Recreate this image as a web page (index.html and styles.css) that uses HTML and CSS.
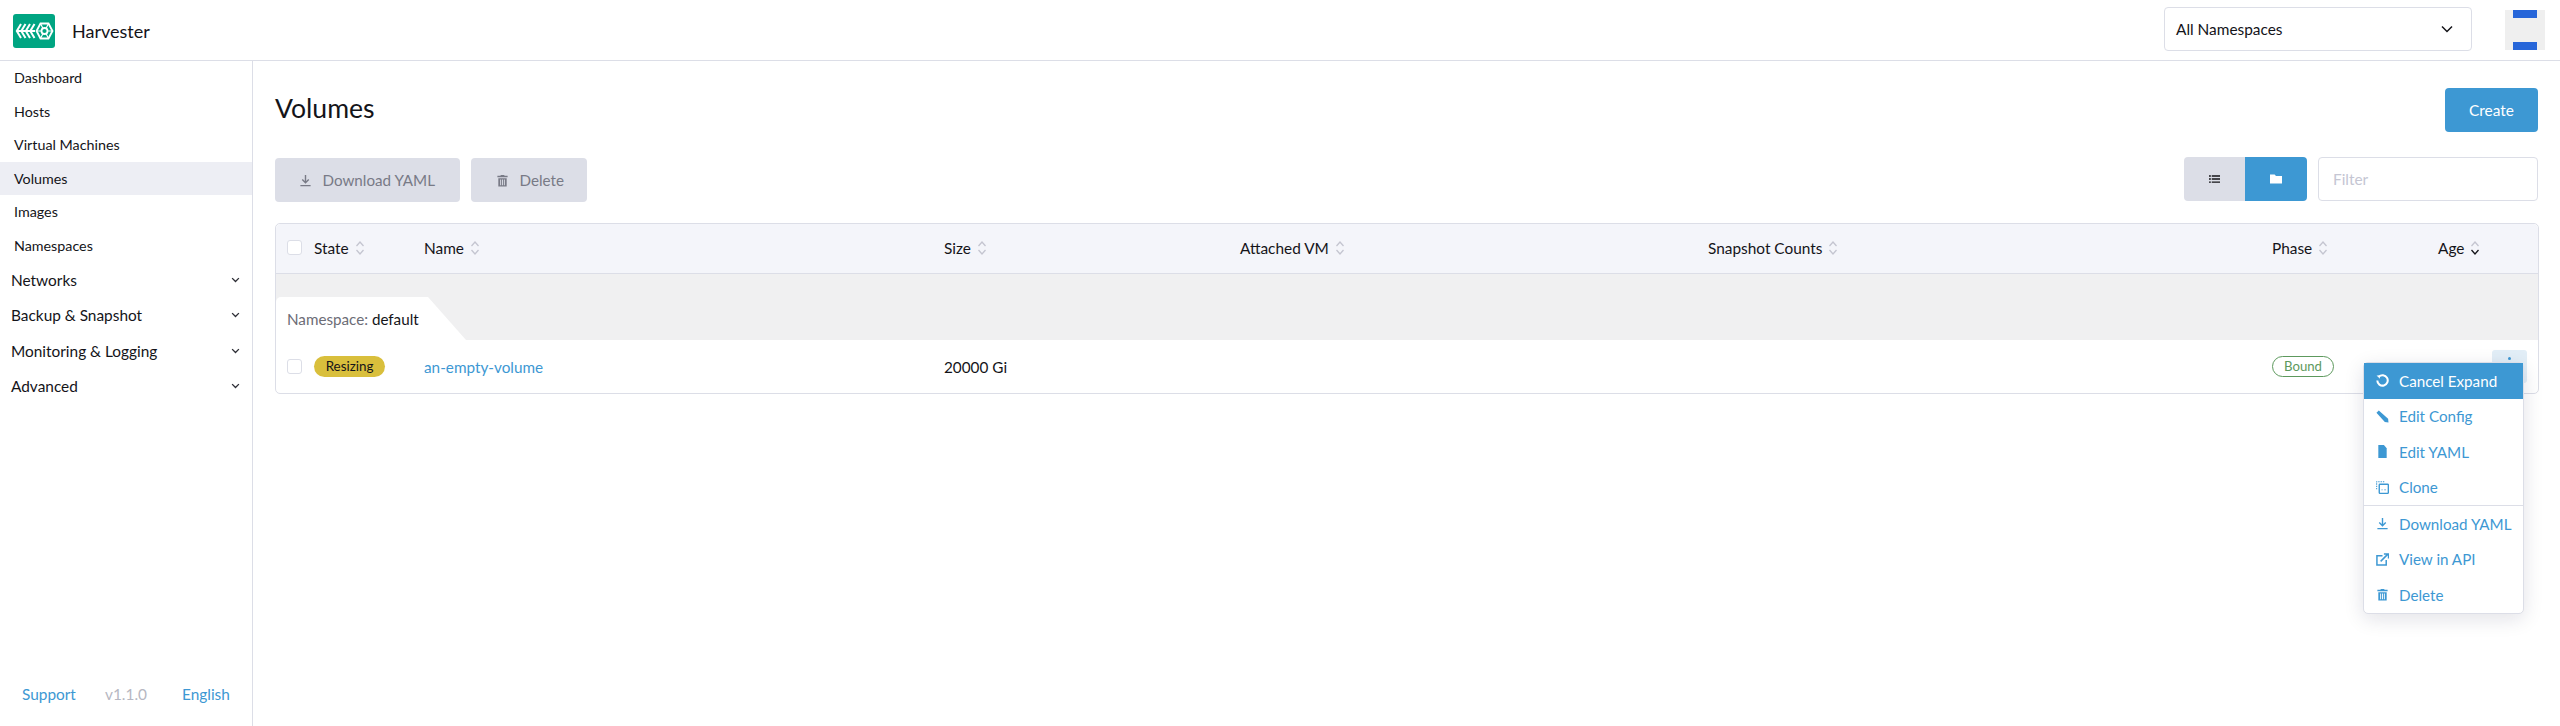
FILE: index.html
```html
<!DOCTYPE html>
<html lang="en">
<head>
<meta charset="utf-8">
<title>Harvester - Volumes</title>
<link rel="stylesheet" href="styles.css">
</head>
<body>
<svg class="sprite" aria-hidden="true">
  <defs>
    <symbol id="sort" viewBox="0 0 10 16"><path class="up" d="M1.500 6 5 2l3.500 4" /><path class="down" d="M1.500 10 5 14l3.500-4" /></symbol>
    <symbol id="chev" viewBox="0 0 12 8"><path d="M1.500 1.500 6 6l4.500-4.500" /></symbol>
    <symbol id="download" viewBox="0 0 14 14"><path d="M7 1v8M3.500 6 7 9.500 10.500 6M1.500 12.500h11" fill="none" stroke="currentColor" stroke-width="1.500"/></symbol>
    <symbol id="trash" viewBox="0 0 14 14"><path d="M5 1h4v1h3.500v1.500h-11V2H5zM2.500 4.500h9V13.500h-9zM4.500 6v6h1V6zM6.500 6v6h1V6zM8.500 6v6h1V6z" fill="currentColor" fill-rule="evenodd"/></symbol>
  </defs>
</svg>
<header class="topbar">
  <div class="brand">
    <svg class="logo" viewBox="0 0 42 34">
      <rect width="42" height="34" rx="3" fill="#00a582"/>
      <g fill="none" stroke="#fff" stroke-width="2">
        <path d="M8 10 3.800 17 8 24M12.500 10l-4.200 7 4.200 7M17 10l-4.200 7 4.200 7M21.500 10l-4.200 7 4.200 7M4 17h18"/>
        <path d="M27.500 9.500h8l4 7.500-4 7.500h-8l-4-7.500z" stroke-width="1.800"/>
        <path d="M27.500 9.500l2.500 5M35.500 9.500l-2.500 5M27.500 24.500l2.500-5M35.500 24.500l-2.500-5M24 17h4.500M35 17h4" stroke-width="1.200"/>
      </g>
      <circle cx="31.500" cy="17" r="3" fill="none" stroke="#fff" stroke-width="1.800"/>
    </svg>
    <span class="brand-name">Harvester</span>
  </div>
  <div class="top-right">
    <div class="ns-select">
      <span>All Namespaces</span>
      <svg class="ns-chev" viewBox="0 0 12 8"><path d="M1 1.500 6 6.500l5-5" /></svg>
    </div>
    <div class="avatar"><i></i><i></i></div>
  </div>
</header>
<div class="shell">
  <nav class="sidebar">
    <a class="nav-item">Dashboard</a>
    <a class="nav-item">Hosts</a>
    <a class="nav-item">Virtual Machines</a>
    <a class="nav-item active">Volumes</a>
    <a class="nav-item">Images</a>
    <a class="nav-item">Namespaces</a>
    <a class="nav-group"><span>Networks</span><svg class="group-chev" viewBox="0 0 12 8"><use href="#chev"/></svg></a>
    <a class="nav-group"><span>Backup &amp; Snapshot</span><svg class="group-chev" viewBox="0 0 12 8"><use href="#chev"/></svg></a>
    <a class="nav-group"><span>Monitoring &amp; Logging</span><svg class="group-chev" viewBox="0 0 12 8"><use href="#chev"/></svg></a>
    <a class="nav-group"><span>Advanced</span><svg class="group-chev" viewBox="0 0 12 8"><use href="#chev"/></svg></a>
    <footer class="side-foot">
      <a>Support</a><span class="version">v1.1.0</span><a>English</a>
    </footer>
  </nav>
  <main class="content">
    <div class="title-row">
      <h1>Volumes</h1>
      <button class="btn-create">Create</button>
    </div>
    <div class="toolbar">
      <div class="bulk">
        <button class="btn-muted dl"><svg class="ic"><use href="#download"/></svg>Download YAML</button>
        <button class="btn-muted del"><svg class="ic"><use href="#trash"/></svg>Delete</button>
      </div>
      <div class="filters">
        <div class="toggle">
          <span class="tg tg-list">
            <svg viewBox="0 0 12 10" class="tg-ic"><path d="M0 1h2v1.500H0zM3 1h9v1.500H3zM0 4.300h2v1.500H0zM3 4.300h9v1.500H3zM0 7.600h2v1.500H0zM3 7.600h9v1.500H3z" fill="#141419"/></svg>
          </span>
          <span class="tg tg-folder">
            <svg viewBox="0 0 13 10" class="tg-ic"><path d="M0 0h5l1.500 1.800H13V10H0z" fill="#fff"/></svg>
          </span>
        </div>
        <div class="filter-input">Filter</div>
      </div>
    </div>
    <section class="table">
      <div class="row head">
        <span class="cell-cb"><i class="cb"></i></span>
        <span class="th">State<svg class="sort"><use href="#sort"/></svg></span>
        <span class="th">Name<svg class="sort"><use href="#sort"/></svg></span>
        <span class="th">Size<svg class="sort"><use href="#sort"/></svg></span>
        <span class="th">Attached VM<svg class="sort"><use href="#sort"/></svg></span>
        <span class="th">Snapshot Counts<svg class="sort"><use href="#sort"/></svg></span>
        <span class="th">Phase<svg class="sort"><use href="#sort"/></svg></span>
        <span class="th">Age<svg class="sort sorted"><use href="#sort"/></svg></span>
      </div>
      <div class="group-row">
        <div class="group-tab"><span class="ns-label">Namespace:</span> default</div>
      </div>
      <div class="row body">
        <span class="cell-cb"><i class="cb"></i></span>
        <span><b class="badge-state">Resizing</b></span>
        <a class="vol-link">an-empty-volume</a>
        <span>20000 Gi</span>
        <span></span>
        <span></span>
        <span><b class="badge-phase">Bound</b></span>
        <span class="cell-act"><i class="act-btn"><i class="dot"></i></i></span>
      </div>
      <ul class="menu">
        <li class="menu-item hot">
          <svg viewBox="0 0 14 14" class="m-ic"><path d="M3 3A5.600 5.600 0 1 1 1.400 7" fill="none" stroke="currentColor" stroke-width="2.200"/><path d="M.6 1.600h3.600v3.600z" fill="currentColor"/></svg>Cancel Expand
        </li>
        <li class="menu-item">
          <svg viewBox="0 0 14 14" class="m-ic"><path d="M.5 3 3 .5 13 9.500l.5 4-4-.5z" fill="currentColor"/></svg>Edit Config
        </li>
        <li class="menu-item">
          <svg viewBox="0 0 14 14" class="m-ic"><path d="M2.500 0H8.500l3 3.500V14h-9z" fill="currentColor"/></svg>Edit YAML
        </li>
        <li class="menu-item">
          <svg viewBox="0 0 14 14" class="m-ic"><path d="M.7 9V.7H9" fill="none" stroke="currentColor" stroke-width="1.100" stroke-dasharray="1.500 1"/><rect x="3.500" y="3.500" width="9.800" height="9.800" rx=".8" fill="none" stroke="currentColor" stroke-width="1.500"/><path d="M6 9.500h1M9 9.500h1.500" stroke="currentColor"/></svg>Clone
        </li>
        <li class="menu-sep"></li>
        <li class="menu-item">
          <svg class="m-ic"><use href="#download"/></svg>Download YAML
        </li>
        <li class="menu-item">
          <svg viewBox="0 0 14 14" class="m-ic"><path d="M7 3H1v10h10V7.500" fill="none" stroke="currentColor" stroke-width="1.600"/><path d="M5 9 12.500 1.500M8.500 1h5v5" fill="none" stroke="currentColor" stroke-width="1.600"/></svg>View in API
        </li>
        <li class="menu-item">
          <svg class="m-ic"><use href="#trash"/></svg>Delete
        </li>
      </ul>
    </section>
  </main>
</div>
</body>
</html>
```
FILE: styles.css
```css
* { box-sizing: border-box; }
html, body { height: 100%; }
body {
  margin: 0;
  display: flex;
  flex-direction: column;
  height: 726px;
  overflow: hidden;
  background: #fff;
  color: #141419;
  font-family: Lato, "Liberation Sans", sans-serif;
  font-size: 14px;
}
.sprite { position: absolute; width: 0; height: 0; }
button { font-family: inherit; border: 0; }

.topbar {
  flex: none;
  height: 61px;
  border-bottom: 1px solid #dcdee7;
  display: flex;
  justify-content: space-between;
  padding: 0 15px 0 13px;
}
.brand { display: flex; align-items: center; gap: 17px; padding-top: 1px; }
.logo { width: 42px; height: 34px; display: block; }
.brand-name { font-size: 18px; }
.top-right { display: flex; gap: 33px; padding-top: 7px; }
.ns-select {
  width: 308px;
  height: 44px;
  border: 1px solid #dcdee7;
  border-radius: 4px;
  display: flex;
  align-items: center;
  justify-content: space-between;
  padding: 0 18px 0 11px;
  font-size: 15.400px;
}
.ns-chev { width: 12px; height: 8px; fill: none; stroke: #141419; stroke-width: 1.500; }
.avatar {
  width: 40px;
  height: 40px;
  margin-top: 3px;
  background: #efefef;
  display: flex;
  flex-direction: column;
  justify-content: space-between;
  align-items: center;
}
.avatar i { width: 24px; height: 8px; background: #2766d9; }

.shell { flex: 1; display: flex; min-height: 0; }
.sidebar {
  flex: none;
  width: 253px;
  border-right: 1px solid #dcdee7;
  display: flex;
  flex-direction: column;
}
.nav-item {
  height: 33.500px;
  line-height: 33.500px;
  padding-left: 14px;
  font-size: 14.300px;
}
.nav-item.active { background: #edeef4; }
.nav-group {
  height: 35.500px;
  display: flex;
  align-items: center;
  justify-content: space-between;
  padding: 0 12px 0 11px;
  font-size: 15.400px;
}
.group-chev { width: 9px; height: 6px; fill: none; stroke: #2e2f36; stroke-width: 1.800; }
.side-foot {
  margin-top: auto;
  height: 62px;
  display: grid;
  grid-template-columns: 83px 77px 1fr;
  align-items: center;
  padding: 0 0 2px 22px;
  font-size: 15.400px;
  color: #3d98d3;
}
.version { color: #b6b7c2; }

.content { flex: 1; min-width: 0; padding: 0 21px 0 22px; position: relative; }
.title-row {
  height: 96px;
  display: flex;
  align-items: center;
  justify-content: space-between;
  padding-top: 1px;
}
h1 { margin: 0 0 3px; font-size: 26.600px; font-weight: 400; }
.btn-create {
  width: 93px;
  height: 44px;
  margin-right: 1px;
  background: #3d98d3;
  color: #fff;
  border-radius: 4px;
  font-size: 15.400px;
}
.toolbar { display: flex; justify-content: space-between; height: 66px; padding-bottom: 21px; }
.bulk { display: flex; gap: 11px; padding-top: 1px; }
.btn-muted {
  height: 44px;
  background: #dcdee7;
  color: #787a86;
  border-radius: 4px;
  display: flex;
  align-items: center;
  gap: 10.500px;
  font-size: 15.200px;
}
.btn-muted.dl { width: 185px; padding-left: 24px; }
.btn-muted.del { width: 116px; padding-left: 25px; }
.ic { width: 13px; height: 13px; flex: none; }
.filters { display: flex; gap: 11px; margin-right: 1px; }
.toggle { display: flex; height: 44px; border-radius: 4px; overflow: hidden; }
.tg { display: flex; align-items: center; justify-content: center; }
.tg-list { width: 61px; background: #dcdee7; }
.tg-folder { width: 62px; background: #3d98d3; }
.tg-ic { width: 11px; height: 10px; }
.tg-folder .tg-ic { width: 12px; }
.filter-input {
  width: 220px;
  height: 44px;
  border: 1px solid #dcdee7;
  border-radius: 4px;
  padding: 0 14px;
  line-height: 42px;
  font-size: 15.400px;
  color: #c5c6d3;
}

.table {
  position: relative;
  border: 1px solid #dcdee7;
  border-radius: 5px;
}
.row {
  display: grid;
  grid-template-columns: 38px 110px 520px 296px 468px 564px 166px 1fr;
  align-items: center;
}
.head {
  height: 50px;
  background: #f4f5fa;
  border-bottom: 1px solid #dcdee7;
  border-radius: 5px 5px 0 0;
  font-size: 15.400px;
  padding-bottom: 2px;
}
.th { display: flex; align-items: center; gap: 6px; }
.sort { width: 10px; height: 16px; fill: none; stroke: #c4c5d0; stroke-width: 1.300; }
.down { stroke: var(--sort-down, inherit); }
.sorted { --sort-down: #141419; }
.cell-cb { padding-left: 11px; display: flex; }
.cb {
  width: 15px;
  height: 15px;
  background: #fff;
  border: 1px solid #dcdee7;
  border-radius: 3px;
}
.group-row {
  height: 66px;
  background: #f0f0f1;
  padding-top: 23px;
}
.group-tab {
  width: 190px;
  height: 43px;
  background: #fff;
  clip-path: polygon(0 0, 152px 0, 100% 100%, 0 100%);
  border-radius: 5px 0 0 0;
  padding-left: 11px;
  line-height: 44px;
  font-size: 15.200px;
}
.ns-label { color: #6c6c76; }
.body { height: 53px; font-size: 15.300px; }
.badge-state {
  display: inline-block;
  width: 71px;
  height: 21px;
  line-height: 21px;
  text-align: center;
  border-radius: 11px;
  background: #d9bf3c;
  font-weight: 400;
  font-size: 13.400px;
  vertical-align: middle;
}
.vol-link { color: #3d98d3; }
.badge-phase {
  display: inline-block;
  width: 62px;
  height: 21px;
  line-height: 19px;
  text-align: center;
  border: 1px solid #5d995d;
  border-radius: 11px;
  color: #5d995d;
  font-weight: 400;
  font-size: 13.200px;
  vertical-align: middle;
}
.cell-act { display: flex; justify-content: flex-end; padding-right: 11px; }
.act-btn {
  width: 35px;
  height: 33px;
  background: #e2eef7;
  border-radius: 3px;
  display: flex;
  justify-content: center;
  padding-top: 7px;
}
.dot { width: 3px; height: 3px; border-radius: 50%; background: #3d98d3; }

.menu {
  position: absolute;
  top: 138px;
  right: 14px;
  width: 161px;
  margin: 0;
  padding: 0;
  list-style: none;
  background: #fff;
  border: 1px solid #dcdee7;
  border-radius: 5px;
  box-shadow: 0 5px 20px rgba(20, 20, 60, .12);
  color: #3d98d3;
  font-size: 15.200px;
}
.menu-item {
  height: 35.500px;
  display: flex;
  align-items: center;
  gap: 10px;
  padding: 0 0 0 12px;
}
.menu-item.hot { background: #3d98d3; color: #fff; }
.menu-sep { height: 1px; margin: 0; background: #dcdee7; }
.m-ic { width: 13px; height: 13px; flex: none; }
```
